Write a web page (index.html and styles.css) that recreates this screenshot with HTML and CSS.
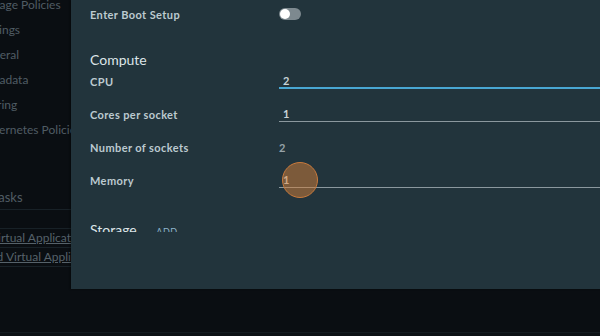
FILE: index.html
```html
<!DOCTYPE html>
<html lang="en">
<head>
    <meta charset="UTF-8">
    <meta name="viewport" content="width=device-width, initial-scale=1.0">
    <title>Edit VM Settings</title>
    <link rel="stylesheet" href="styles.css">
</head>
<body>
    <div class="page">
        <nav class="sidebar">
            <ul class="nav-list">
                <li class="nav-item nav-first">Storage Policies</li>
                <li class="nav-item">Settings</li>
                <li class="nav-item">General</li>
                <li class="nav-item">Metadata</li>
                <li class="nav-item">Sharing</li>
                <li class="nav-item">Kubernetes Policies</li>
            </ul>
            <div class="tasks-head">Tasks</div>
            <div class="tasks-list">
                <a class="task-link task-one" href="#">Virtual Applications</a>
                <a class="task-link task-two" href="#">Shared Virtual Applications</a>
            </div>
        </nav>
        <footer class="page-footer"></footer>
    </div>

    <div class="modal">
        <div class="modal-body">
            <div class="form-row boot-row">
                <label class="form-label">Enter Boot Setup</label>
                <div class="toggle"><span class="toggle-knob"></span></div>
            </div>

            <h3 class="section-title">Compute</h3>
            <div class="form-row">
                <label class="form-label" for="cpu">CPU</label>
                <input class="form-input focused" id="cpu" type="text" value="2">
            </div>
            <div class="form-row">
                <label class="form-label" for="cores">Cores per socket</label>
                <input class="form-input" id="cores" type="text" value="1">
            </div>
            <div class="form-row">
                <label class="form-label">Number of sockets</label>
                <span class="form-static">2</span>
            </div>
            <div class="form-row">
                <label class="form-label" for="memory">Memory</label>
                <input class="form-input" id="memory" type="text" value="1">
            </div>

            <h3 class="section-title storage-title">Storage <span class="add-link">ADD</span></h3>
        </div>
        <div class="click-marker"></div>
    </div>
</body>
</html>
```

FILE: styles.css
```css
body {
    margin: 0;
    background-color: #0a0e12;
    font-family: Lato, "Open Sans", sans-serif;
    overflow: hidden;
}
.page {
    height: 336px;
    display: flex;
    flex-direction: column;
}
.sidebar {
    flex: 1;
    width: 71px;
    overflow: hidden;
    color: #505c64;
    font-size: 12px;
}
.nav-list {
    list-style: none;
    margin: 0;
    padding: 0;
    margin-top: -8px;
}
.nav-item {
    height: 25px;
    line-height: 25px;
    white-space: nowrap;
    margin-left: -22px;
}
.tasks-head {
    margin-top: 43px;
    margin-left: -8px;
    height: 24px;
    line-height: 24px;
    font-size: 13px;
    border-bottom: 1px solid #182127;
    width: 200px;
}
.tasks-list {
    margin-top: 18px;
    border-top: 1px solid #182127;
    width: 200px;
}
.task-link {
    display: block;
    height: 18px;
    line-height: 18px;
    color: #56626a;
    white-space: nowrap;
    font-size: 12px;
    border-bottom: 1px solid #182127;
}
.task-one {
    margin-left: -10px;
}
.task-two {
    margin-left: -33px;
}
.page-footer {
    height: 3px;
    border-top: 1px solid #131b20;
    background-color: #0c1115;
}

.modal {
    position: absolute;
    top: 0;
    left: 71px;
    right: -20px;
    height: 289px;
    background-color: #22343c;
    box-shadow: -1px 0 2px rgba(0,0,0,0.4);
}
.modal-body {
    height: 232px;
    overflow: hidden;
    padding-left: 19px;
}
.form-row {
    display: grid;
    grid-template-columns: 189px 1fr;
    align-items: center;
    height: 24px;
    margin-bottom: 9px;
}
.boot-row {
    margin-top: 2px;
    margin-bottom: 0;
}
.form-label {
    color: #bccad0;
    font-size: 11px;
    font-weight: bold;
    letter-spacing: 0.4px;
}
.toggle {
    width: 22px;
    height: 12px;
    border-radius: 6px;
    background-color: #7d898f;
    position: relative;
}
.toggle-knob {
    position: absolute;
    left: 1px;
    top: 1px;
    width: 10px;
    height: 10px;
    border-radius: 50%;
    background-color: #ffffff;
}
.section-title {
    margin: 25px 0 0;
    height: 18px;
    line-height: 18px;
    font-size: 14px;
    font-weight: normal;
    color: #dde5e8;
}
.storage-title {
    margin-top: 29px;
}
.add-link {
    margin-left: 16px;
    font-size: 9px;
    letter-spacing: 0.5px;
    color: #8fb6cc;
}
.form-input {
    align-self: start;
    margin-top: 4px;
    height: 15px;
    padding: 0 4px;
    border: none;
    border-bottom: 1px solid #8b989e;
    background: transparent;
    color: #c8d3d8;
    font-family: Lato, "Open Sans", sans-serif;
    font-size: 11px;
    font-weight: bold;
    outline: none;
}
.form-input.focused {
    height: 14px;
    border-bottom: 2px solid #49a7d3;
}
.form-static {
    color: #97a3a9;
    font-size: 11px;
    font-weight: bold;
}
.click-marker {
    position: absolute;
    left: 211px;
    top: 162px;
    width: 34px;
    height: 34px;
    border-radius: 50%;
    background-color: rgba(214, 128, 56, 0.5);
    border: 1.5px solid #c97a3c;
}
```
